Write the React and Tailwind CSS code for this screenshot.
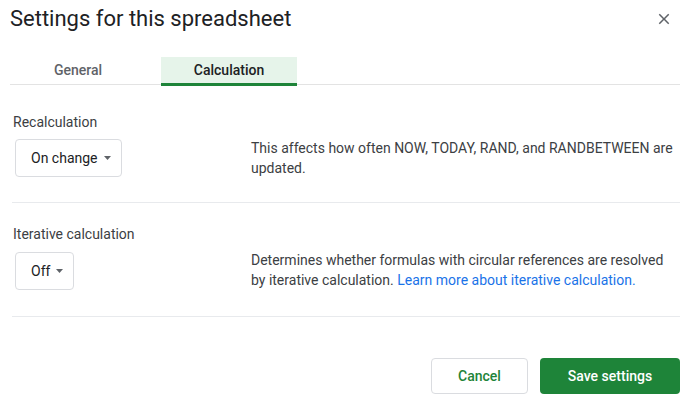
import React from "react";

function Dropdown({ label }) {
  return (
    <div className="ml-[3px] h-[38px] flex items-center pl-[15px] pr-[10px] border border-[#dadce0] rounded-[4px] text-[14px] text-[#202124]">
      <span className="leading-[20px]">{label}</span>
      <svg width="7" height="4" viewBox="0 0 7 4" className="ml-[6px]">
        <path d="M0 0 L7 0 L3.5 4 Z" fill="#5f6368" />
      </svg>
    </div>
  );
}

export default function App() {
  return (
    <div
      className="w-[692px] h-[410px] bg-white overflow-hidden"
      style={{ fontFamily: "Roboto, 'Liberation Sans', Arial, sans-serif" }}
    >
      <div className="flex justify-between items-start pl-[10px] pt-[5px]">
        <div className="text-[22px] leading-[28px] text-[#202124]">Settings for this spreadsheet</div>
        <svg width="18" height="18" viewBox="0 0 24 24" className="mt-[5px] mr-[19px]">
          <path
            d="M19 6.41L17.59 5 12 10.59 6.41 5 5 6.41 10.59 12 5 17.59 6.41 19 12 13.41 17.59 19 19 17.59 13.41 12z"
            fill="#5f6368"
          />
        </svg>
      </div>

      <div className="mt-[24px] ml-[10px] mr-[12px] flex border-b border-[#e3e3e3]">
        <div className="w-[136px] h-[29px] -mb-[2px] flex items-center justify-center pb-[3px] text-[14px] font-medium text-[#5f6368]">
          General
        </div>
        <div className="ml-[15px] w-[136px] h-[29px] -mb-[2px] flex items-center justify-center bg-[#e6f4ea] border-b-[3px] border-[#1e8439] text-[14px] font-medium text-[#202124]">
          Calculation
        </div>
      </div>

      <div className="px-[12px]">
        <div className="pt-[27px]">
          <div className="pl-[1px] text-[14px] leading-[20px] text-[#3c4043]">Recalculation</div>
          <div className="mt-[7px] flex items-start">
            <div className="w-[239px] flex">
              <Dropdown label="On change" />
            </div>
            <div className="-mt-[1px] text-[14px] leading-[20px] text-[#3c4043] whitespace-nowrap">
              This affects how often NOW, TODAY, RAND, and RANDBETWEEN are
              <br />
              updated.
            </div>
          </div>
          <div className="mt-[24px] h-px bg-[#e8eaed]" />
        </div>

        <div className="pt-[21px]">
          <div className="pl-[1px] text-[14px] leading-[20px] text-[#3c4043]">Iterative calculation</div>
          <div className="mt-[8px] flex items-start">
            <div className="w-[239px] flex">
              <Dropdown label="Off" />
            </div>
            <div className="-mt-[2px] text-[14px] leading-[20px] text-[#3c4043] whitespace-nowrap">
              Determines whether formulas with circular references are resolved
              <br />
              by iterative calculation.{" "}
              <span className="text-[#1a73e8]">Learn more about iterative calculation.</span>
            </div>
          </div>
          <div className="mt-[26px] h-px bg-[#e8eaed]" />
        </div>

        <div className="mt-[41px] flex justify-end gap-[12px]">
          <button className="w-[97px] h-[36px] border border-[#dadce0] rounded-[4px] bg-white text-[14px] font-medium text-[#1e8439]">
            Cancel
          </button>
          <button className="w-[140px] h-[36px] rounded-[4px] bg-[#1e8439] text-[14px] font-medium text-white">
            Save settings
          </button>
        </div>
      </div>
    </div>
  );
}
